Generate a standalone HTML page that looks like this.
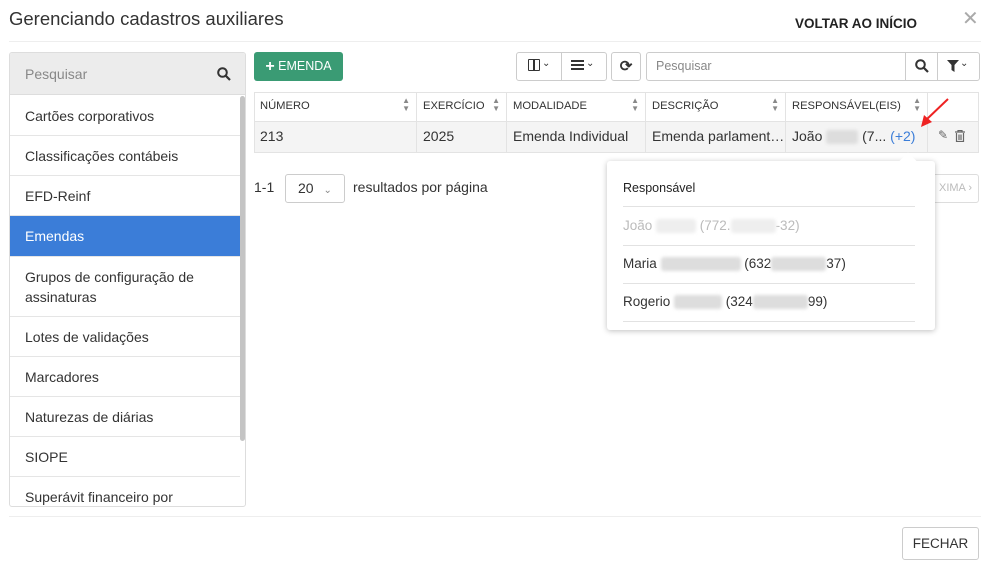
<!DOCTYPE html><html><head><meta charset="utf-8"><style>
*{box-sizing:border-box;margin:0;padding:0}
body{width:990px;height:566px;background:#fff;font-family:"Liberation Sans",sans-serif;color:#333;position:relative;overflow:hidden;font-size:14px}
.a{position:absolute}
.side div.it{position:absolute;left:0;width:230px;padding-left:15px;border-bottom:1px solid #e5e5e5;font-size:14px;color:#333;display:flex;align-items:center}
.th{position:absolute;top:92px;height:29px;border-right:1px solid #e3e3e3;font-size:11.2px;color:#333;padding-left:6px;line-height:29px}
.td{position:absolute;top:121px;height:31px;border-right:1px solid #e3e3e3;font-size:14px;padding-left:6px;line-height:31px;white-space:nowrap;overflow:hidden}
.srt{position:absolute;right:6px;top:5px;font-size:8px;color:#888;line-height:8px}
.blur{display:inline-block;background:#ddd;height:14px;vertical-align:middle;border-radius:3px;filter:blur(1.5px)}
.pi{position:absolute;left:16px;width:292px;border-bottom:1px solid #e2e2e2;font-size:13.5px;line-height:38px}
</style></head><body>
<div class="a" style="left:9px;top:8px;font-size:18.5px;color:#333">Gerenciando cadastros auxiliares</div>
<div class="a" style="left:795px;top:16px;font-size:13.5px;font-weight:bold;color:#222">VOLTAR AO INÍCIO</div>
<div class="a" style="left:962px;top:6px;font-size:20px;color:#aaa">✕</div>
<div class="a" style="left:9px;top:41px;width:972px;height:1px;background:#eee"></div>

<div class="a side" style="left:9px;top:52px;width:237px;height:455px;border:1px solid #ddd;border-radius:3px;overflow:hidden">
<div class="a" style="left:0;top:0;width:237px;height:42px;background:#ececec;border-bottom:1px solid #ddd"></div>
<div class="a" style="left:15px;top:13px;color:#888;font-size:14px">Pesquisar</div>
<svg class="a" style="left:207px;top:14px" width="14" height="14" viewBox="0 0 14 14"><circle cx="5.5" cy="5.5" r="4.3" fill="none" stroke="#333" stroke-width="2"/><path d="M8.7 8.7L13 13" stroke="#333" stroke-width="2.2"/></svg>
<div class="it" style="top:43px;height:40px">Cartões corporativos</div>
<div class="it" style="top:83px;height:40px">Classificações contábeis</div>
<div class="it" style="top:123px;height:40px">EFD-Reinf</div>
<div class="it" style="top:163px;height:41px;background:#3b7dd8;color:#fff">Emendas</div>
<div class="it" style="top:204px;height:60px;line-height:20px">Grupos de configuração de<br>assinaturas</div>
<div class="it" style="top:264px;height:40px">Lotes de validações</div>
<div class="it" style="top:304px;height:40px">Marcadores</div>
<div class="it" style="top:344px;height:40px">Naturezas de diárias</div>
<div class="it" style="top:384px;height:40px">SIOPE</div>
<div class="it" style="top:424px;height:40px">Superávit financeiro por</div>
<div class="a" style="left:230px;top:43px;width:5px;height:345px;background:#c4c4c4;border-radius:3px"></div>
</div>

<div class="a" style="left:254px;top:52px;width:89px;height:29px;background:#3a9b74;border-radius:3px;color:#fff;font-size:12.5px;line-height:29px;text-align:center"><b style="font-size:16px;vertical-align:-1px">+</b> EMENDA</div>

<div class="a" style="left:516px;top:52px;width:91px;height:29px;border:1px solid #ccc;border-radius:3px"></div>
<div class="a" style="left:561px;top:52px;width:1px;height:29px;background:#ccc"></div>
<div class="a" style="left:528px;top:59px;width:12px;height:12px;border:1.5px solid #333;border-radius:1px"></div>
<div class="a" style="left:533px;top:59px;width:1.5px;height:12px;background:#333"></div>
<div class="a" style="left:542px;top:58px;font-size:10px">⌄</div>
<div class="a" style="left:571px;top:60px;width:13px;height:2px;background:#333;box-shadow:0 4px 0 #333,0 8px 0 #333"></div>
<div class="a" style="left:586px;top:58px;font-size:10px">⌄</div>
<div class="a" style="left:611px;top:52px;width:30px;height:29px;border:1px solid #ccc;border-radius:3px;text-align:center;line-height:27px;font-size:15px;font-weight:bold">⟳</div>
<div class="a" style="left:646px;top:52px;width:334px;height:29px;border:1px solid #ccc;border-radius:3px"></div>
<div class="a" style="left:656px;top:59px;font-size:12.5px;color:#888">Pesquisar</div>
<div class="a" style="left:905px;top:52px;width:1px;height:29px;background:#ccc"></div>
<div class="a" style="left:937px;top:52px;width:1px;height:29px;background:#ccc"></div>
<svg class="a" style="left:915px;top:59px" width="14" height="14" viewBox="0 0 14 14"><circle cx="5.5" cy="5.5" r="4.3" fill="none" stroke="#333" stroke-width="2"/><path d="M8.7 8.7L13 13" stroke="#333" stroke-width="2.2"/></svg>
<svg class="a" style="left:947px;top:60px" width="12" height="12" viewBox="0 0 12 12"><path d="M0 0H12L7.5 5V12L4.5 10V5Z" fill="#333"/></svg>
<div class="a" style="left:960px;top:58px;font-size:10px">⌄</div>

<div class="a" style="left:254px;top:92px;width:725px;height:61px;border:1px solid #e3e3e3"></div>
<div class="a" style="left:255px;top:121px;width:723px;height:31px;background:#f4f4f4;border-top:1px solid #e3e3e3"></div>
<div class="th" style="left:254px;width:163px">NÚMERO<span class="srt">▲<br>▼</span></div>
<div class="th" style="left:417px;width:90px">EXERCÍCIO<span class="srt">▲<br>▼</span></div>
<div class="th" style="left:507px;width:139px">MODALIDADE<span class="srt">▲<br>▼</span></div>
<div class="th" style="left:646px;width:140px">DESCRIÇÃO<span class="srt">▲<br>▼</span></div>
<div class="th" style="left:786px;width:142px">RESPONSÁVEL(EIS)<span class="srt">▲<br>▼</span></div>
<div class="td" style="left:254px;width:163px">213</div>
<div class="td" style="left:417px;width:90px">2025</div>
<div class="td" style="left:507px;width:139px">Emenda Individual</div>
<div class="td" style="left:646px;width:140px">Emenda parlament…</div>
<div class="td" style="left:786px;width:142px">João <span class="blur" style="width:32px"></span> (7... <span style="color:#3b7dd8">(+2)</span></div>
<div class="a" style="left:938px;top:128px;font-size:12px;color:#666">✎</div>
<svg class="a" style="left:955px;top:130px" width="10" height="12" viewBox="0 0 10 12"><path d="M0 2H10M3 2V0.5H7V2M1.5 3V11.5H8.5V3M4 4.5V10M6 4.5V10" fill="none" stroke="#666" stroke-width="1.2"/></svg>
<svg class="a" style="left:915px;top:96px" width="36" height="34" viewBox="0 0 36 34"><path d="M33 3L11 24" stroke="#e22" stroke-width="2"/><path d="M6 31L9 19L17 26Z" fill="#e22"/></svg>

<div class="a" style="left:254px;top:179px;font-size:14px">1-1</div>
<div class="a" style="left:285px;top:174px;width:60px;height:29px;border:1px solid #ccc;border-radius:3px;font-size:14px;line-height:27px;padding-left:12px">20 <span style="color:#888;font-size:10px;margin-left:6px">⌄</span></div>
<div class="a" style="left:353px;top:179px;font-size:14px">resultados por página</div>
<div class="a" style="left:915px;top:174px;width:64px;height:29px;border:1px solid #ddd;border-radius:3px;color:#bbb;font-size:11px;line-height:27px;text-align:right;padding-right:6px">XIMA ›</div>

<div class="a" style="left:607px;top:161px;width:328px;height:169px;background:#fff;border-radius:3px;box-shadow:0 1px 6px rgba(0,0,0,.25)">
<div class="a" style="left:295px;top:-6px;width:12px;height:12px;background:#fff;transform:rotate(45deg)"></div>
<div class="pi" style="top:8px;height:38px;font-size:12.5px;color:#222">Responsável</div>
<div class="pi" style="top:46px;color:#bbb">João <span class="blur" style="width:40px;background:#eee"></span> (772.<span class="blur" style="width:45px;background:#eee"></span>-32)</div>
<div class="pi" style="top:84px">Maria <span class="blur" style="width:80px"></span> (632<span class="blur" style="width:55px"></span>37)</div>
<div class="pi" style="top:122px">Rogerio <span class="blur" style="width:48px"></span> (324<span class="blur" style="width:55px"></span>99)</div>
</div>

<div class="a" style="left:9px;top:516px;width:972px;height:1px;background:#eee"></div>
<div class="a" style="left:902px;top:527px;width:77px;height:33px;border:1px solid #ccc;border-radius:3px;font-size:13.5px;line-height:31px;text-align:center">FECHAR</div>
</body></html>
